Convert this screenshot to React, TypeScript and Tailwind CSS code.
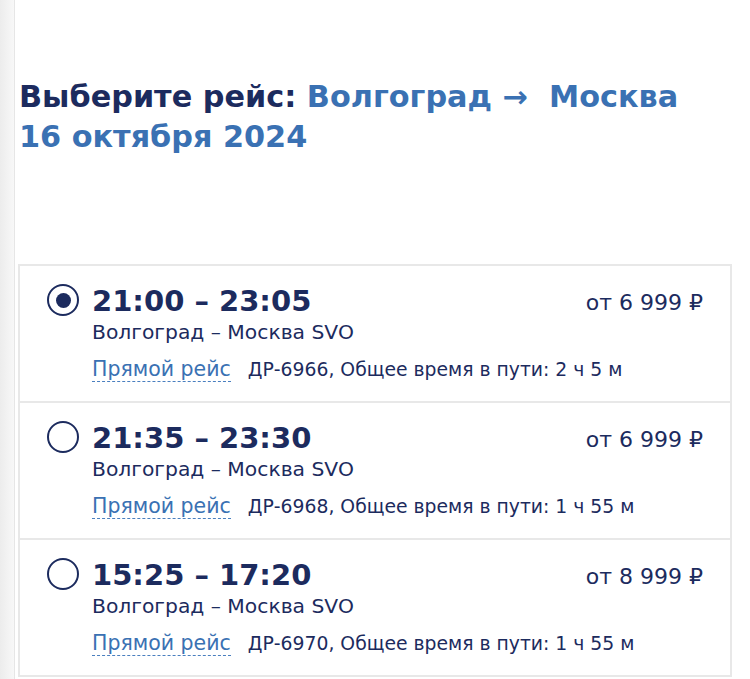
import React from "react";

interface Flight {
  id: string;
  dep: string;
  arr: string;
  route: string;
  code: string;
  duration: string;
  price: string;
}

const flights: Flight[] = [
  { id: "1", dep: "21:00", arr: "23:05", route: "Волгоград – Москва SVO", code: "ДР-6966", duration: "2 ч 5 м", price: "6 999" },
  { id: "2", dep: "21:35", arr: "23:30", route: "Волгоград – Москва SVO", code: "ДР-6968", duration: "1 ч 55 м", price: "6 999" },
  { id: "3", dep: "15:25", arr: "17:20", route: "Волгоград – Москва SVO", code: "ДР-6970", duration: "1 ч 55 м", price: "8 999" },
];

const Radio: React.FC<{ checked: boolean }> = ({ checked }) => (
  <span className="mt-[1px] flex h-[32px] w-[32px] shrink-0 items-center justify-center rounded-full border-2 border-[#1c2b5e] bg-white">
    {checked && <span className="h-[15px] w-[15px] rounded-full bg-[#1c2b5e]" />}
  </span>
);

const App: React.FC = () => {
  const selected = "1";

  return (
    <div
      className="flex h-[679px] w-[750px] overflow-hidden bg-white text-[#1c2b5e]"
      style={{ fontFamily: "'DejaVu Sans', sans-serif" }}
    >
      {/* left rail */}
      <div className="w-[15px] shrink-0 border-r border-[#e6e6e6] bg-gradient-to-r from-[#ececec] to-[#f8f8f8]" />

      <div className="flex-1 pl-[3px] pr-[18px]">
        <h1 className="mt-[77px] pl-[1px] text-[30.3px] font-bold leading-[40px]">
          Выберите рейс: <span className="text-[#3a71b3]">Волгоград →&nbsp; Москва</span>
          <br />
          <span className="text-[#3a71b3]">16 октября 2024</span>
        </h1>

        <div className="mt-[107px] border-2 border-b-0 border-[#e8e8e8]">
          {flights.map((f) => (
            <div key={f.id} className="flex h-[137px] gap-[13px] border-b-2 border-[#e8e8e8] pl-[27px] pr-[27px] pt-[17px]">
              <Radio checked={f.id === selected} />
              <div className="flex-1">
                <div className="flex items-start justify-between">
                  <div className="text-[29px] font-bold leading-[36px]">
                    {f.dep} – {f.arr}
                  </div>
                  <div className="pt-[7px] text-[22px] leading-[26px]">от {f.price} ₽</div>
                </div>
                <div className="text-[20.3px] leading-[26px]">{f.route}</div>
                <div className="mt-[12px] flex items-baseline gap-[17px] text-[18.8px] leading-[24px]">
                  <span className="border-b border-dashed border-[#4a7fbf] text-[20.5px] text-[#3a71b3]">Прямой рейс</span>
                  <span>
                    {f.code}, Общее время в пути: {f.duration}
                  </span>
                </div>
              </div>
            </div>
          ))}
        </div>
      </div>
    </div>
  );
};

export default App;
